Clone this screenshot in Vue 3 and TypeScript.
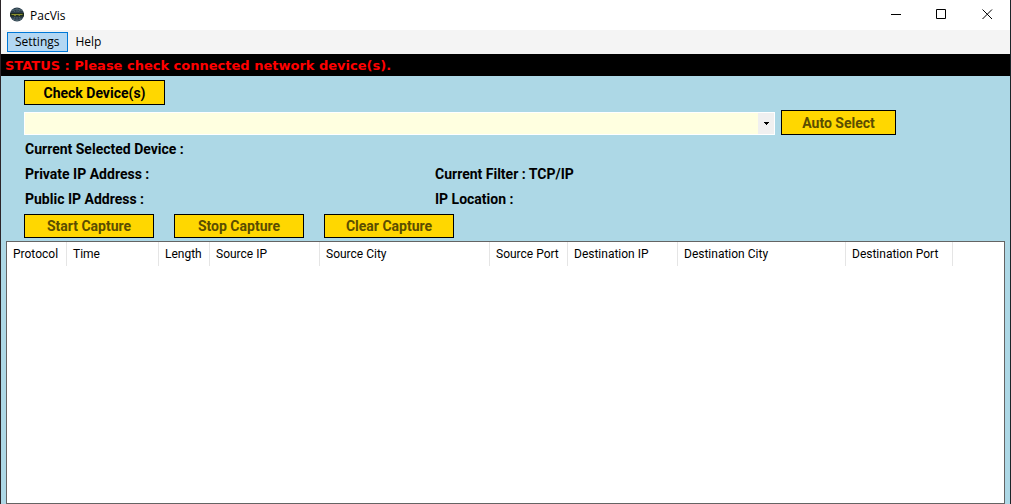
<script setup lang="ts">
import { ref } from 'vue'

interface Column {
  label: string
  width: number
}

const device = ref('')
const columns: Column[] = [
  { label: 'Protocol', width: 60 },
  { label: 'Time', width: 92 },
  { label: 'Length', width: 51 },
  { label: 'Source IP', width: 110 },
  { label: 'Source City', width: 170 },
  { label: 'Source Port', width: 78 },
  { label: 'Destination IP', width: 110 },
  { label: 'Destination City', width: 168 },
  { label: 'Destination Port', width: 107 },
]
const captureActions: string[] = ['Start Capture', 'Stop Capture', 'Clear Capture']
</script>

<template>
  <div class="window">
    <header class="titlebar">
      <svg class="logo" viewBox="1 0 16 16" aria-hidden="true">
        <circle cx="9" cy="7.500" r="7" fill="#2b3d4b" />
        <path d="M4 3.500 Q9 .5 14 3.500 M4 12 Q9 15 14 12 M9 1 V5 M5 2.500 L7 5 M12 2 L10.500 5 M9 10 V14 M7 10 L5 13 M11 10 L13 12.500" fill="none" stroke="#59717a" stroke-width="0.7" />
        <path d="M2 6 H16 V9.500 H2Z" fill="#202f22" />
        <path d="M3.500 7.500 H14.500" fill="none" stroke="#8b912f" stroke-width="1" />
        <path d="M6 8.500 H8 M10.500 8.500 H12" fill="none" stroke="#6d742d" stroke-width="1" />
      </svg>
      <span class="title">PacVis</span>
      <div class="window-controls">
        <button type="button" aria-label="Minimize">
          <svg viewBox="0 0 11 11"><path d="M1 5.500 H11" /></svg>
        </button>
        <button type="button" aria-label="Maximize">
          <svg viewBox="0 0 11 11"><path d="M.5 .5 H9.500 V9.500 H.5Z" /></svg>
        </button>
        <button type="button" aria-label="Close">
          <svg viewBox="0 0 11 11"><path d="M.5 .5 L10 10 M10 .5 L.5 10" /></svg>
        </button>
      </div>
    </header>

    <nav class="menubar">
      <button type="button" class="menu active">Settings</button>
      <button type="button" class="menu">Help</button>
    </nav>

    <div class="status" role="status">STATUS : Please check connected network device(s).</div>

    <main class="content">
      <section class="controls">
        <button type="button" class="action check">Check Device(s)</button>
        <div class="device-row">
          <div class="combo">
            <select v-model="device" aria-label="Network device">
              <option value=""></option>
            </select>
            <span class="arrow">
              <svg viewBox="0 0 5 3" shape-rendering="crispEdges"><path d="M0 0 H5 V1 H4 V2 H3 V3 H2 V2 H1 V1 H0Z" /></svg>
            </span>
          </div>
          <button type="button" class="action auto" disabled>Auto Select</button>
        </div>
        <div class="info">
          <span class="wide">Current Selected Device :</span>
          <span>Private IP Address :</span>
          <span>Current Filter : TCP/IP</span>
          <span>Public IP Address :</span>
          <span>IP Location :</span>
        </div>
        <div class="captures">
          <button v-for="label in captureActions" :key="label" type="button" class="action capture" disabled>
            {{ label }}
          </button>
        </div>
      </section>

      <div class="packets">
        <table>
          <colgroup>
            <col v-for="column in columns" :key="column.label" :style="{ width: column.width + 'px' }" />
            <col />
          </colgroup>
          <thead>
            <tr>
              <th v-for="column in columns" :key="column.label" scope="col">{{ column.label }}</th>
              <td></td>
            </tr>
          </thead>
          <tbody></tbody>
        </table>
      </div>
    </main>
  </div>
</template>

<style>
body {
  margin: 0;
}
</style>

<style scoped>
* {
  box-sizing: border-box;
}
.window {
  display: flex;
  flex-direction: column;
  min-height: 100vh;
  border-left: 1px solid #2b2529;
  border-right: 1px solid #1c2529;
  background: #add8e6;
  color: #000;
  font-family: Roboto, "Liberation Sans", sans-serif;
  font-size: 12px;
}
button {
  font: inherit;
  color: inherit;
  padding: 0;
}
.titlebar {
  display: flex;
  align-items: center;
  height: 30px;
  padding-left: 8px;
  background: #fff;
}
.logo {
  width: 16px;
  height: 16px;
}
.title {
  margin-left: 5px;
  font-family: "Open Sans", "Noto Sans", sans-serif;
}
.window-controls {
  display: flex;
  height: 28px;
  align-self: flex-start;
  margin-left: auto;
}
.window-controls button {
  display: flex;
  align-items: center;
  justify-content: center;
  width: 46px;
  border: 0;
  background: none;
}
.window-controls svg {
  width: 11px;
  height: 11px;
  fill: none;
  stroke: #000;
  stroke-width: 1;
}
.menubar {
  display: flex;
  align-items: center;
  height: 24px;
  padding-left: 6px;
  background: #f4f4f4;
  font-family: "Open Sans", "Noto Sans", sans-serif;
}
.menu {
  height: 20px;
  padding: 0 7px;
  border: 1px solid transparent;
  background: none;
  line-height: 18px;
}
.menu.active {
  border-color: #0078d7;
  background: #b3d7f3;
}
.status {
  padding: 1px 0 0 4px;
  background: #000;
  color: #f00;
  font: bold 13px/21px "DejaVu Sans", sans-serif;
}
.content {
  display: flex;
  flex: 1;
  flex-direction: column;
  padding: 4px 5px 0;
}
.controls {
  padding: 0 109px 0 18px;
  font-weight: bold;
  font-size: 14px;
}
.action {
  display: block;
  height: 25px;
  border: 1px solid #000;
  background: #ffd700;
  font-weight: bold;
  font-size: 14px;
}
.action:disabled {
  color: #5b4d00;
}
.check {
  width: 141px;
}
.device-row {
  display: flex;
  align-items: flex-end;
  gap: 6px;
  margin-top: 5px;
}
.combo {
  position: relative;
  flex: 1;
  height: 23px;
}
.combo select {
  display: block;
  width: 100%;
  height: 100%;
  appearance: none;
  border: 1px solid #fff;
  border-radius: 0;
  background: #ffffe0;
}
.arrow {
  position: absolute;
  top: 1px;
  right: 1px;
  bottom: 1px;
  display: flex;
  align-items: center;
  justify-content: center;
  width: 16px;
  background: #f0f0f0;
  pointer-events: none;
}
.arrow svg {
  width: 5px;
  height: 3px;
}
.auto {
  width: 115px;
}
.info {
  display: grid;
  grid-template-columns: 410px 1fr;
  margin-top: 2px;
  padding-left: 1px;
  line-height: 25px;
}
.wide {
  grid-column: 1 / -1;
}
.captures {
  display: flex;
  gap: 20px;
  margin-top: 2px;
}
.capture {
  width: 130px;
  height: 24px;
}
.packets {
  flex: 1;
  margin-top: 3px;
  border: 1px solid #646464;
  background: #fff;
}
table {
  width: 100%;
  table-layout: fixed;
  border-collapse: separate;
  border-spacing: 0;
}
th {
  height: 24px;
  padding: 0 0 0 6px;
  border-right: 1px solid #e5e5e5;
  font-weight: normal;
  text-align: left;
  white-space: nowrap;
}
td {
  padding: 0;
}
</style>
